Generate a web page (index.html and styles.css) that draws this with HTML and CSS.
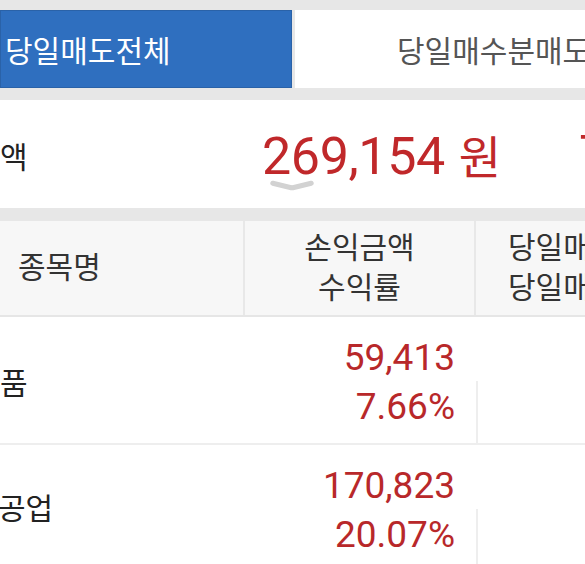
FILE: index.html
```html
<!DOCTYPE html>
<html lang="ko">
<head>
<meta charset="utf-8">
<link rel="stylesheet" href="styles.css">
</head>
<body>
<div class="screen">
  <div class="tabs">
    <div class="tab tab-active">당일매도전체</div>
    <div class="tab tab-idle">당일매수분매도</div>
  </div>
  <div class="summary">
    <div class="sum-label">액</div>
    <div class="sum-amount">
      <span class="num">269,154</span><span class="won">원</span>
      <span class="chev"></span>
    </div>
    <div class="sum-next">7</div>
  </div>
  <div class="table">
    <div class="thead">
      <div class="th th-name">종목명</div>
      <div class="th th-mid">손익금액<br>수익률</div>
      <div class="th th-right">당일매<br>당일매</div>
    </div>
    <div class="row">
      <div class="name">품</div>
      <div class="val val-top">59,413</div>
      <div class="side side-top"></div>
      <div class="val val-bot">7.66%</div>
      <div class="side side-bot"></div>
    </div>
    <div class="row">
      <div class="name name-cut">공업</div>
      <div class="val val-top">170,823</div>
      <div class="side side-top"></div>
      <div class="val val-bot">20.07%</div>
      <div class="side side-bot"></div>
    </div>
  </div>
</div>
</body>
</html>
```

FILE: styles.css
```css
* { box-sizing: border-box; }
html, body { margin: 0; padding: 0; }
body {
  width: 585px;
  height: 564px;
  overflow: hidden;
  background: #ffffff;
  font-family: Roboto, "Noto Sans CJK KR", sans-serif;
  color: #333333;
}
.screen { width: 585px; }

.tabs {
  display: flex;
  background: #e7e7e7;
  padding: 10px 0 12px 0;
  gap: 3px;
}
.tab {
  height: 78px;
  display: flex;
  align-items: center;
  font-size: 30px;
  white-space: nowrap;
  overflow: hidden;
}
.tab-active {
  width: 292px;
  flex: none;
  background: #2f6fbf;
  color: #ffffff;
  padding-left: 4px;
  border: 1px solid #2a62a8;
}
.tab-idle {
  flex: 1;
  background: #ffffff;
  color: #555555;
  padding-left: 102px;
}

.summary {
  display: flex;
  align-items: center;
  white-space: nowrap;
  overflow: hidden;
  border-bottom: 13px solid #e7e7e7;
  height: 121px;
}
.sum-label {
  width: 262px;
  flex: none;
  font-size: 30px;
  color: #222222;
  margin-top: 2px;
}
.sum-amount {
  position: relative;
  color: #c0282a;
  display: flex;
  align-items: baseline;
  flex: none;
}
.num { font-size: 52px; letter-spacing: -0.4px; }
.won { font-size: 46px; margin-left: 14px; }
.chev {
  position: absolute;
  left: 8px;
  bottom: -5px;
  width: 44px;
  height: 12px;
}
.chev::before, .chev::after {
  content: "";
  position: absolute;
  top: 3px;
  width: 24px;
  height: 5px;
  background: #d2d2d2;
  border-radius: 3px;
}
.chev::before { left: 0; transform: rotate(14deg); }
.chev::after { right: 0; transform: rotate(-14deg); }
.sum-next {
  flex: none;
  margin-left: 78px;
  font-size: 50px;
  color: #c0282a;
}

.thead {
  display: grid;
  grid-template-columns: 245px 231px 1fr;
  height: 96px;
  background: #f7f7f7;
  border-bottom: 2px solid #e6e6e6;
}
.th {
  display: flex;
  align-items: center;
  font-size: 30px;
  line-height: 40px;
  color: #333333;
  white-space: nowrap;
  overflow: hidden;
}
.th-name { padding-left: 18px; border-right: 2px solid #e8e8e8; }
.th-mid { justify-content: center; text-align: center; border-right: 2px solid #e8e8e8; }
.th-right { padding-left: 32px; }

.row {
  display: grid;
  grid-template-columns: 245px 231px 1fr;
  grid-template-rows: 64px 62px;
  border-bottom: 2px solid #eeeeee;
}
.name {
  grid-row: 1 / 3;
  grid-column: 1;
  display: flex;
  align-items: center;
  font-size: 30px;
  color: #222222;
  padding-top: 2px;
}
.name-cut { margin-left: -2px; padding-top: 0; margin-top: -4px; }
.val {
  grid-column: 2;
  text-align: right;
  padding-right: 21px;
  font-size: 37px;
  line-height: 40px;
  color: #b8282a;
  display: flex;
  justify-content: flex-end;
}
.val-top { grid-row: 1; align-items: flex-end; padding-bottom: 3px; }
.val-bot { grid-row: 2; align-items: flex-start; padding-top: 6px; }
.side { grid-column: 3; }
.side-top { grid-row: 1; }
.side-bot { grid-row: 2; border-left: 2px solid #eeeeee; }
```
